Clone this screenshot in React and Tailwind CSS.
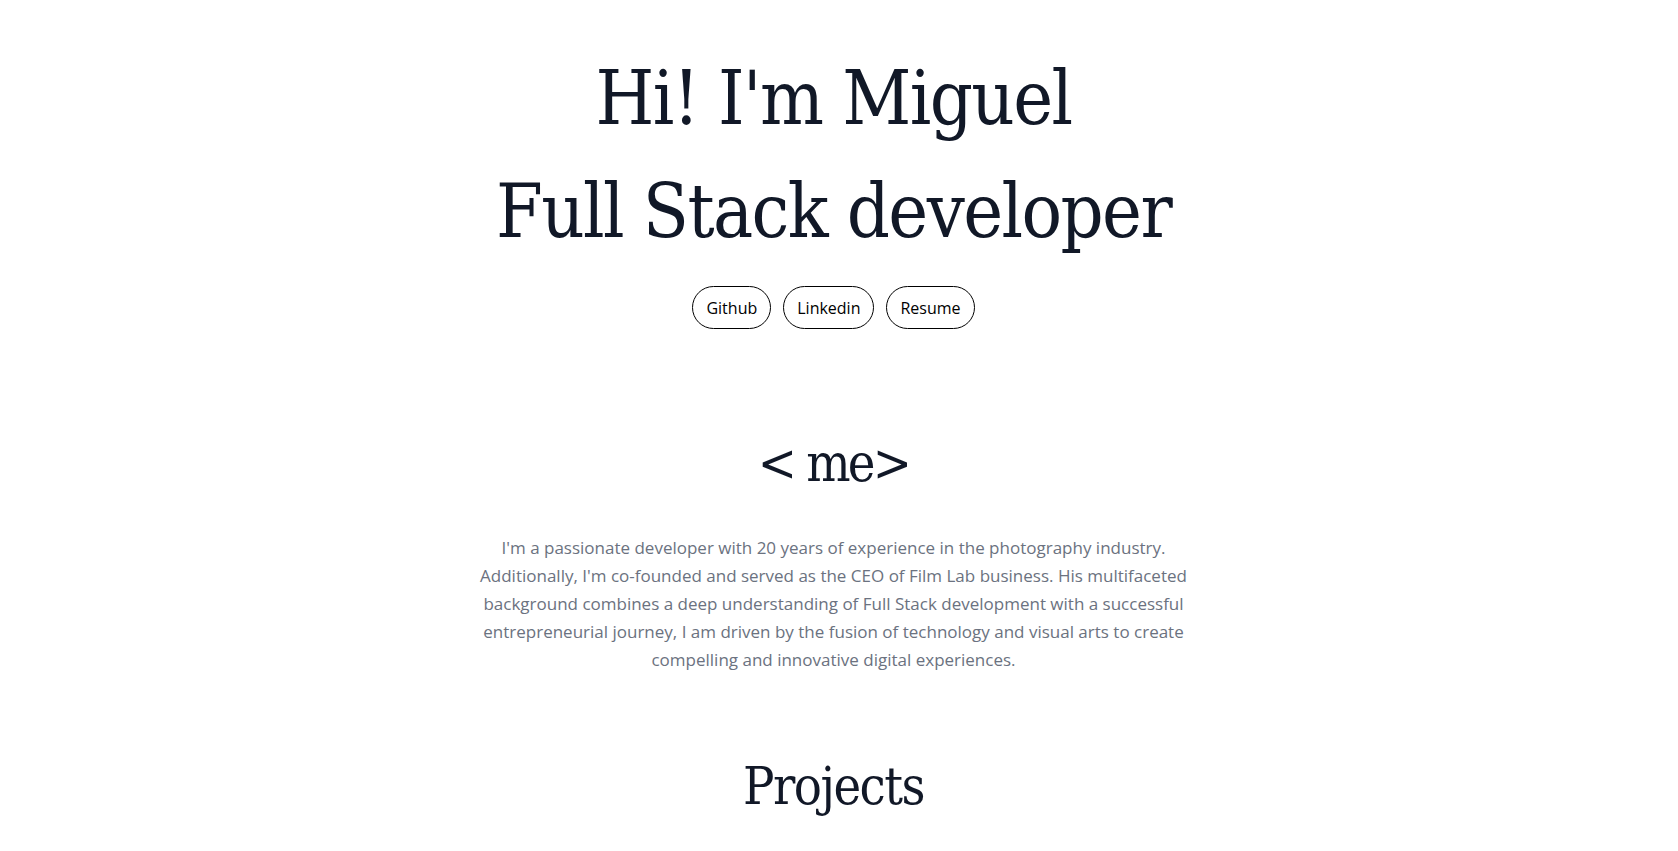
export default function App() {
  const serif = { fontFamily: '"DejaVu Serif Condensed", "DejaVu Serif", serif' };
  const sans = { fontFamily: '"Open Sans", "Noto Sans", sans-serif' };
  return (
    <div className="min-h-[851px] bg-white pr-[11px] text-center">
      <div className="flex flex-col items-center pt-[42px]">
        <h1 style={serif} className="text-[75px] leading-[113px] tracking-[-1.6px] text-[#111827]">
          <div>Hi! I'm Miguel</div>
          <div>Full Stack developer</div>
        </h1>
        <div style={sans} className="mt-[18px] flex gap-3 text-[16px] text-black">
          <a className="flex h-[43px] items-center rounded-full border border-black px-[13px]">Github</a>
          <a className="flex h-[43px] items-center rounded-full border border-black px-[13px]">Linkedin</a>
          <a className="flex h-[43px] items-center rounded-full border border-black px-[13px]">Resume</a>
        </div>

        <h2 style={serif} className="mt-[102px] text-[52px] leading-[64px] tracking-[-2.8px] text-[#111827]">
          &lt; me&gt;
        </h2>
        <p style={sans} className="mt-[39px] max-w-[736px] text-[17px] leading-[28px] text-[#6b7280]">
          I'm a passionate developer with 20 years of experience in the photography industry. Additionally, I'm co-founded and served as the CEO of Film Lab business. His multifaceted background combines a deep understanding of Full Stack development with a successful entrepreneurial journey, I am driven by the fusion of technology and visual arts to create compelling and innovative digital experiences.
        </p>

        <h2 style={serif} className="mt-[80px] text-[52px] leading-[64px] tracking-[-1.5px] text-[#111827]">
          Projects
        </h2>
      </div>
    </div>
  );
}
